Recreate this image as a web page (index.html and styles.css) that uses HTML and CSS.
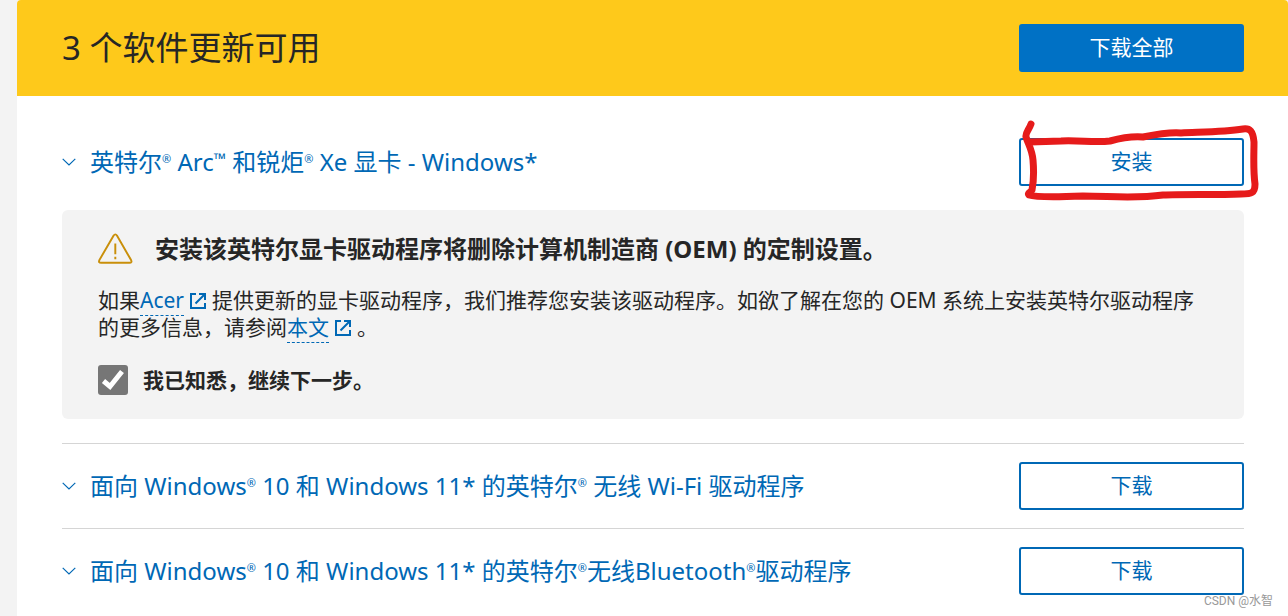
FILE: index.html
```html
<!DOCTYPE html>
<html lang="zh-CN">
<head>
<meta charset="utf-8">
<title>软件更新</title>
<link rel="stylesheet" href="styles.css">
</head>
<body>
<main class="panel">
  <header class="banner">
    <h1 class="banner-title">3 个软件更新可用</h1>
    <button class="btn btn-primary" type="button">下载全部</button>
  </header>
  <div class="updates">
    <section class="update">
      <div class="update-head">
        <a class="update-link" href="#"><svg class="chevron" viewBox="0 0 14 8" aria-hidden="true"><path d="M0.7 0.9 7 6.9 13.3 0.9"/></svg><span>英特尔<sup>®</sup> Arc<sup class="tm">™</sup> 和锐炬<sup>®</sup> Xe 显卡 - Windows*</span></a>
        <div class="marked">
          <button class="btn" type="button">安装</button>
          <svg class="scribble" viewBox="0 0 244 84" aria-hidden="true"><path d="M13 7C11 13 7 16 8 20C10 27 14 32 15 43C16 55 15 68 14 73C13 75 9 76 11 78C17 80 42 80 65 79C92 79 116 82 145 78C164 77 198 78 223 77C234 77 237 76 237 67C235 52 236 37 236 25C235 14 232 11 225 12C206 15 182 15 163 16C152 15 140 17 125 20C113 19 103 21 92 24C77 26 61 23 43 24L12 25"/></svg>
        </div>
      </div>
      <div class="notice">
        <div class="notice-head">
          <svg class="warning" viewBox="0 0 36 32" aria-hidden="true"><path d="M16.1 2.1 1.4 27.4Q0.2 30.2 3.2 30.2H32.4Q35.4 30.2 34 27.4L19.5 2.1Q17.8 -0.2 16.1 2.1Z"/><path d="M17.8 10.3V21.5M17.8 24V26.6"/></svg>
          <h2 class="notice-title">安装该英特尔显卡驱动程序将删除计算机制造商 (OEM) 的定制设置。</h2>
        </div>
        <p class="notice-text">如果<a class="link" href="#">Acer</a><svg class="external" viewBox="0 0 16 16" aria-hidden="true"><path d="M6 1H1V15H15V10M9 1H15V7M15 1 5.5 10.5"/></svg>提供更新的显卡驱动程序，我们推荐您安装该驱动程序。如欲了解在您的 OEM 系统上安装英特尔驱动程序的更多信息，请参阅<a class="link" href="#">本文</a><svg class="external" viewBox="0 0 16 16" aria-hidden="true"><path d="M6 1H1V15H15V10M9 1H15V7M15 1 5.5 10.5"/></svg>。</p>
        <div class="confirm">
          <span class="check"><input class="check-input" id="ack" type="checkbox" checked><svg class="check-mark" viewBox="0 0 30 30" aria-hidden="true"><path d="M5.5 16 12 21.5 24 6.5"/></svg></span>
          <label for="ack">我已知悉，继续下一步。</label>
        </div>
      </div>
    </section>
    <section class="update">
      <div class="update-head">
        <a class="update-link" href="#"><svg class="chevron" viewBox="0 0 14 8" aria-hidden="true"><path d="M0.7 0.9 7 6.9 13.3 0.9"/></svg><span>面向 Windows<sup>®</sup> 10 和 Windows 11* 的英特尔<sup>®</sup> 无线 Wi-Fi 驱动程序</span></a>
        <button class="btn" type="button">下载</button>
      </div>
    </section>
    <section class="update">
      <div class="update-head">
        <a class="update-link" href="#"><svg class="chevron" viewBox="0 0 14 8" aria-hidden="true"><path d="M0.7 0.9 7 6.9 13.3 0.9"/></svg><span>面向 Windows<sup>®</sup> 10 和 Windows 11* 的英特尔<sup>®</sup>无线Bluetooth<sup>®</sup>驱动程序</span></a>
        <button class="btn" type="button">下载</button>
      </div>
    </section>
  </div>
</main>
<div class="watermark">CSDN @水智</div>
</body>
</html>
```
FILE: styles.css
```css
* {
  box-sizing: border-box;
}

body {
  margin: 0;
  padding-left: 17px;
  background: #f3f3f3;
  color: #262626;
  font-family: "Noto Sans", "Noto Sans CJK SC", sans-serif;
  font-size: 21px;
  line-height: 27px;
}

.panel {
  min-height: 100vh;
  background: #fff;
  border-radius: 4px 4px 0 0;
  overflow: hidden;
}

.banner {
  display: flex;
  align-items: center;
  justify-content: space-between;
  padding: 24px 44px 24px 45px;
  background: #fec91b;
}

.banner-title {
  margin: 0;
  font-size: 33px;
  font-weight: 400;
  line-height: 48px;
}

.btn {
  flex: none;
  width: 225px;
  height: 48px;
  padding: 0 0 2px;
  border: 2px solid #0068b5;
  border-radius: 3px;
  background: #fff;
  color: #0068b5;
  font: inherit;
}

.btn-primary {
  border-color: #0071c5;
  background: #0071c5;
  color: #fff;
}

.updates {
  padding: 24px 44px 0 45px;
}

.update {
  padding: 18px 0;
}

.update + .update {
  border-top: 1px solid #d5d5d5;
}

.update-head {
  display: flex;
  align-items: center;
  justify-content: space-between;
}

.update-link {
  display: flex;
  align-items: center;
  gap: 14px;
  color: #0068b5;
  font-size: 24px;
  line-height: 32px;
  text-decoration: none;
}

.update-link sup {
  font-size: 11px;
  line-height: 0;
  vertical-align: 8px;
}

.update-link .tm {
  font-size: 16px;
  vertical-align: 6px;
}

.chevron {
  flex: none;
  width: 14px;
  height: 8px;
  fill: none;
  stroke: #0068b5;
  stroke-width: 1.2;
}

.marked {
  position: relative;
  display: flex;
}

.scribble {
  position: absolute;
  left: -1px;
  top: -21px;
  width: 244px;
  height: 84px;
  fill: none;
  stroke: #e61b1b;
  stroke-width: 7;
  stroke-linecap: round;
  stroke-linejoin: round;
  pointer-events: none;
}

.notice {
  margin: 24px 0 6px;
  padding: 23px 36px 24px;
  border-radius: 6px;
  background: #f3f3f3;
}

.notice-head {
  display: flex;
  align-items: center;
  gap: 22px;
}

.warning {
  flex: none;
  width: 35px;
  height: 32px;
  fill: none;
  stroke: #c98f0a;
  stroke-width: 2;
}

.notice-title {
  margin: 0;
  font-size: 24px;
  font-weight: 700;
  line-height: 32px;
}

.notice-text {
  margin: 22px 0 24px;
}

.link {
  padding-bottom: 1px;
  border-bottom: 1px dashed #0068b5;
  color: #0068b5;
  text-decoration: none;
}

.external {
  width: 16px;
  height: 16px;
  margin: 0 6px;
  vertical-align: -1px;
  fill: none;
  stroke: #0068b5;
  stroke-width: 2;
}

.confirm {
  display: flex;
  align-items: center;
  gap: 15px;
  font-weight: 700;
}

.check {
  position: relative;
  display: flex;
}

.check-input {
  appearance: none;
  width: 30px;
  height: 30px;
  margin: 0;
  border-radius: 3px;
  background: #767676;
}

.check-mark {
  position: absolute;
  inset: 0;
  display: none;
  fill: none;
  stroke: #fff;
  stroke-width: 5;
  pointer-events: none;
}

.check-input:checked + .check-mark {
  display: block;
}

.watermark {
  position: absolute;
  right: 15px;
  bottom: 7px;
  color: #999;
  font-family: Roboto, "Noto Sans CJK SC", sans-serif;
  font-size: 12px;
  line-height: 16px;
}
```
